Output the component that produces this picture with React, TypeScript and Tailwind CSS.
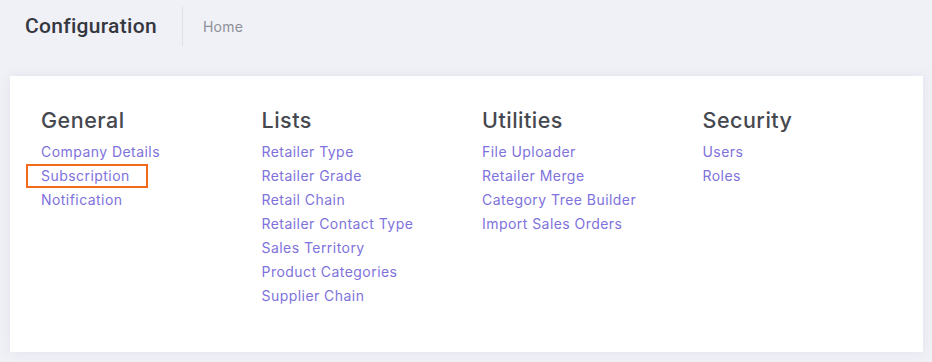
// Configuration landing page — header with breadcrumb and a card of grouped settings links.

const SECTIONS: { title: string; links: string[] }[] = [
  { title: 'General', links: ['Company Details', 'Subscription', 'Notification'] },
  {
    title: 'Lists',
    links: [
      'Retailer Type',
      'Retailer Grade',
      'Retail Chain',
      'Retailer Contact Type',
      'Sales Territory',
      'Product Categories',
      'Supplier Chain',
    ],
  },
  {
    title: 'Utilities',
    links: ['File Uploader', 'Retailer Merge', 'Category Tree Builder', 'Import Sales Orders'],
  },
  { title: 'Security', links: ['Users', 'Roles'] },
];

// the reference highlights this one link with an outline box
const HIGHLIGHTED = 'Subscription';

export default function App() {
  return (
    <div className="min-h-[362px] w-[932px] bg-[#f0f1f7] font-['Inter',sans-serif]">
      {/* ── Header ─────────────────────────────────────────────── */}
      <div className="flex h-[52px] items-center pl-[25px] pt-[1px]">
        <h1 className="font-['Roboto',sans-serif] text-[21px] font-medium leading-none tracking-[0.3px] text-[#35373f]">
          Configuration
        </h1>
        <div className="ml-[25px] h-[39px] w-px bg-[#dfe0e7]" />
        <span className="ml-[20px] text-[14px] tracking-[0.3px] text-[#8d8f99]">Home</span>
      </div>

      {/* ── Card ───────────────────────────────────────────────── */}
      <div className="ml-[10px] mt-[24px] h-[276px] w-[913px] bg-white pl-[31px] pt-[30px] shadow-[0_0_12px_rgba(82,63,105,0.08)]">
        <div className="grid grid-cols-[220.5px_220.5px_220.5px_1fr]">
          {SECTIONS.map((section) => (
            <div key={section.title} className="flex flex-col">
              <h2 className="mb-[6px] text-[21.5px] font-medium leading-[28px] tracking-[0.5px] text-[#46484f]">
                {section.title}
              </h2>
              {section.links.map((link) => (
                <a
                  key={link}
                  href="#"
                  className={
                    link === HIGHLIGHTED
                      ? '-ml-[15px] w-[122px] border-2 border-[#f26a1b] pl-[13px] text-[14px] leading-[20px] tracking-[0.45px] text-[#7e72dc]'
                      : 'text-[14px] leading-[24px] tracking-[0.45px] text-[#7e72dc]'
                  }
                >
                  {link}
                </a>
              ))}
            </div>
          ))}
        </div>
      </div>
    </div>
  );
}
